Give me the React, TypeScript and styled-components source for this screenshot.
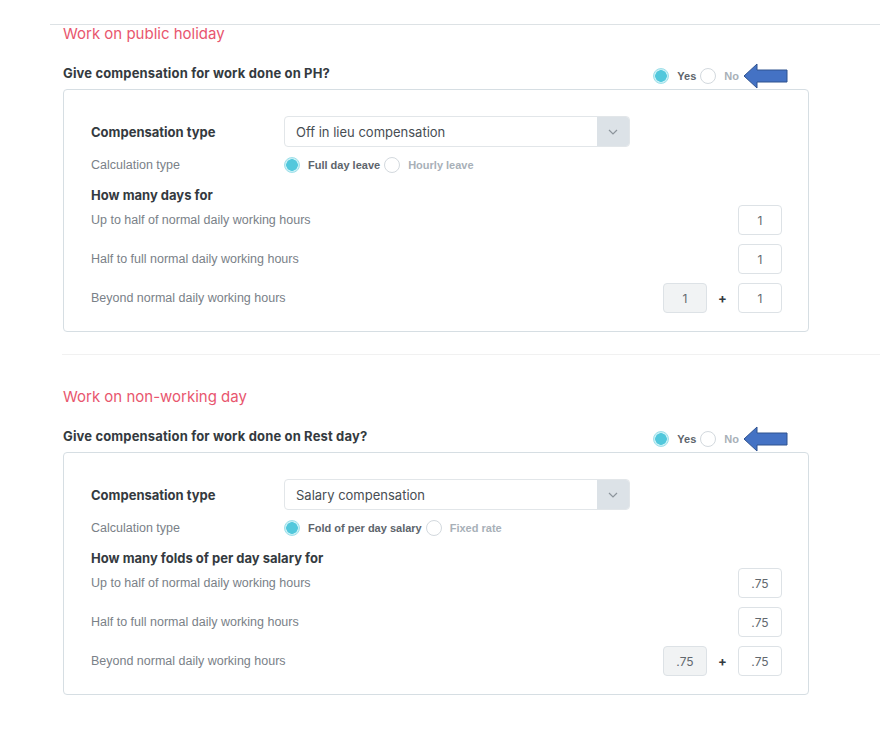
import React from "react";
import styled, { createGlobalStyle } from "styled-components";

const GlobalStyle = createGlobalStyle`
  body {
    margin: 0;
    background: #ffffff;
    font-family: "Liberation Sans", Arial, sans-serif;
  }
`;

type Row = { label: string; value: string; extra?: string };

type SectionData = {
  title: string;
  question: string;
  compType: string;
  calcOptions: [string, string];
  amountTitle: string;
  rows: Row[];
};

const sections: SectionData[] = [
  {
    title: "Work on public holiday",
    question: "Give compensation for work done on PH?",
    compType: "Off in lieu compensation",
    calcOptions: ["Full day leave", "Hourly leave"],
    amountTitle: "How many days for",
    rows: [
      { label: "Up to half of normal daily working hours", value: "1" },
      { label: "Half to full normal daily working hours", value: "1" },
      { label: "Beyond normal daily working hours", value: "1", extra: "1" },
    ],
  },
  {
    title: "Work on non-working day",
    question: "Give compensation for work done on Rest day?",
    compType: "Salary compensation",
    calcOptions: ["Fold of per day salary", "Fixed rate"],
    amountTitle: "How many folds of per day salary for",
    rows: [
      { label: "Up to half of normal daily working hours", value: ".75" },
      { label: "Half to full normal daily working hours", value: ".75" },
      { label: "Beyond normal daily working hours", value: ".75", extra: ".75" },
    ],
  },
];

function Radio({ checked, label }: { checked?: boolean; label: string }) {
  return (
    <RadioItem>
      <RadioDot $checked={checked} />
      <RadioLabel $checked={checked}>{label}</RadioLabel>
    </RadioItem>
  );
}

function Arrow() {
  return (
    <ArrowSvg width="46" height="26" viewBox="0 0 46 26">
      <path
        d="M1 13 L14 1 L14 7 L44 7 L44 19 L14 19 L14 25 Z"
        fill="#4472c4"
        stroke="#2f528f"
        strokeWidth="1"
      />
    </ArrowSvg>
  );
}

function Chevron() {
  return (
    <svg width="10" height="6" viewBox="0 0 10 6">
      <path d="M1 1 L5 5 L9 1" fill="none" stroke="#8d959c" strokeWidth="1.2" />
    </svg>
  );
}

function CompSection({ data, first }: { data: SectionData; first?: boolean }) {
  return (
    <Section $first={first}>
      <Title>{data.title}</Title>
      <QuestionRow>
        <Question>{data.question}</Question>
        <RadioGroup>
          <Radio checked label="Yes" />
          <Radio label="No" />
          <Arrow />
        </RadioGroup>
      </QuestionRow>
      <Box>
        <FieldRow>
          <BoldLabel>Compensation type</BoldLabel>
          <Select>
            <SelectText>{data.compType}</SelectText>
            <SelectButton>
              <Chevron />
            </SelectButton>
          </Select>
        </FieldRow>
        <CalcRow>
          <Label>Calculation type</Label>
          <RadioGroup>
            <Radio checked label={data.calcOptions[0]} />
            <Radio label={data.calcOptions[1]} />
          </RadioGroup>
        </CalcRow>
        <AmountTitle>{data.amountTitle}</AmountTitle>
        <AmountList>
          {data.rows.map((r, i) => (
            <AmountRow key={i}>
              <Label>{r.label}</Label>
              <Inputs>
                {r.extra !== undefined && (
                  <>
                    <ValueBox $muted>{r.value}</ValueBox>
                    <Plus>+</Plus>
                  </>
                )}
                <ValueBox>{r.extra !== undefined ? r.extra : r.value}</ValueBox>
              </Inputs>
            </AmountRow>
          ))}
        </AmountList>
      </Box>
    </Section>
  );
}

export default function App() {
  return (
    <>
      <GlobalStyle />
      <Page>
        {sections.map((s, i) => (
          <CompSection key={i} data={s} first={i === 0} />
        ))}
      </Page>
    </>
  );
}

const Page = styled.div`
  padding-top: 24px;
  width: 880px;
  padding-bottom: 40px;
`;

const Section = styled.section<{ $first?: boolean }>`
  border-top: 1px solid ${(p) => (p.$first ? "#dde2e5" : "#f1f1f1")};
  margin-left: ${(p) => (p.$first ? "50px" : "62px")};
  padding-left: ${(p) => (p.$first ? "13px" : "1px")};
  padding-top: ${(p) => (p.$first ? "0" : "33px")};
  padding-bottom: 22px;
`;

const Title = styled.div`
  font-family: Inter, "Open Sans", sans-serif;
  font-size: 15px;
  line-height: 18px;
  font-weight: 400;
  color: #e8566e;
`;

const QuestionRow = styled.div`
  display: flex;
  align-items: center;
  justify-content: space-between;
  width: 746px;
  height: 26px;
  margin-top: 20px;
  padding-right: 20px;
  box-sizing: border-box;
`;

const Question = styled.div`
  font-family: Inter, "Open Sans", sans-serif;
  font-size: 13px;
  letter-spacing: 0.15px;
  font-weight: 700;
  color: #343a40;
  margin-top: -6px;
`;

const RadioGroup = styled.div`
  display: flex;
  align-items: center;
  gap: 4px;
`;

const RadioItem = styled.div`
  display: flex;
  align-items: center;
  gap: 8px;
`;

const RadioDot = styled.span<{ $checked?: boolean }>`
  width: 16px;
  height: 16px;
  border-radius: 50%;
  box-sizing: border-box;
  border: 1px solid ${(p) => (p.$checked ? "#9fe0ea" : "#d3d9de")};
  background: ${(p) =>
    p.$checked ? "radial-gradient(circle, #52c8dc 0 5.5px, #c6f0f6 6px)" : "#ffffff"};
`;

const RadioLabel = styled.span<{ $checked?: boolean }>`
  font-family: "Liberation Sans", Arial, sans-serif;
  font-size: 11px;
  font-weight: 700;
  color: ${(p) => (p.$checked ? "#5d646b" : "#a8b0b8")};
`;

const ArrowSvg = styled.svg`
  display: block;
`;

const Box = styled.div`
  width: 746px;
  box-sizing: border-box;
  border: 1px solid #d6dee3;
  border-radius: 4px;
  padding: 26px 26px 18px 27px;
`;

const FieldRow = styled.div`
  display: flex;
  align-items: center;
  height: 31px;
`;

const BoldLabel = styled.div`
  width: 193px;
  font-family: Inter, "Open Sans", sans-serif;
  font-size: 13px;
  font-weight: 700;
  color: #343a40;
`;

const Select = styled.div`
  display: flex;
  width: 346px;
  height: 31px;
  box-sizing: border-box;
  border: 1px solid #e2e6e9;
  border-radius: 4px;
  overflow: hidden;
`;

const SelectText = styled.div`
  flex: 1;
  display: flex;
  align-items: center;
  padding-left: 11px;
  font-family: Inter, "Open Sans", sans-serif;
  font-size: 13px;
  color: #474d53;
`;

const SelectButton = styled.div`
  width: 32px;
  display: flex;
  align-items: center;
  justify-content: center;
  background: #dce2e7;
`;

const CalcRow = styled.div`
  display: flex;
  align-items: center;
  height: 18px;
  margin-top: 9px;

  & > div:first-child {
    width: 193px;
  }
`;

const Label = styled.div`
  font-family: "Liberation Sans", Arial, sans-serif;
  font-size: 12.5px;
  color: #7a8188;
`;

const AmountTitle = styled.div`
  font-family: Inter, "Open Sans", sans-serif;
  font-size: 13px;
  font-weight: 700;
  color: #343a40;
  line-height: 18px;
  margin-top: 12px;
`;

const AmountList = styled.div`
  display: flex;
  flex-direction: column;
  gap: 9px;
  margin-top: 1px;
`;

const AmountRow = styled.div`
  display: flex;
  align-items: center;
  justify-content: space-between;
  height: 30px;
`;

const Inputs = styled.div`
  display: flex;
  align-items: center;
`;

const ValueBox = styled.div<{ $muted?: boolean }>`
  width: 44px;
  height: 30px;
  box-sizing: border-box;
  border: 1px solid #dde2e6;
  border-radius: 4px;
  background: ${(p) => (p.$muted ? "#f1f3f4" : "#ffffff")};
  display: flex;
  align-items: center;
  justify-content: center;
  font-family: Inter, "Open Sans", sans-serif;
  font-size: 12px;
  color: #62686e;
`;

const Plus = styled.div`
  width: 31px;
  text-align: center;
  font-family: Inter, "Open Sans", sans-serif;
  font-size: 13px;
  font-weight: 700;
  color: #343a40;
`;
